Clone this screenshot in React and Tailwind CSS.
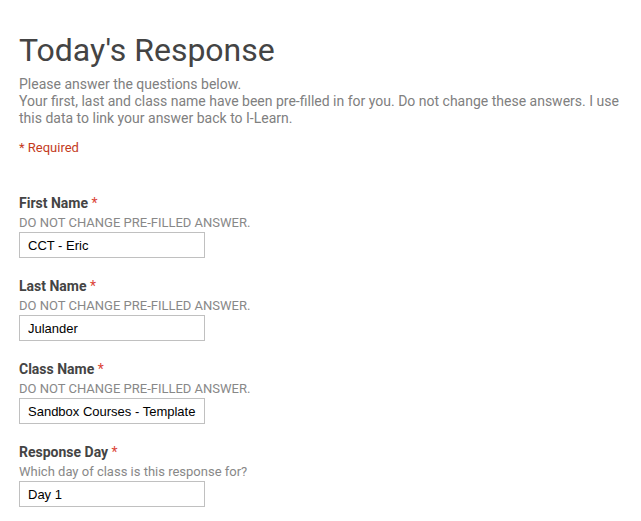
const fields = [
  { label: "First Name", help: "DO NOT CHANGE PRE-FILLED ANSWER.", value: "CCT - Eric" },
  { label: "Last Name", help: "DO NOT CHANGE PRE-FILLED ANSWER.", value: "Julander" },
  { label: "Class Name", help: "DO NOT CHANGE PRE-FILLED ANSWER.", value: "Sandbox Courses - Template" },
  { label: "Response Day", help: "Which day of class is this response for?", value: "Day 1" },
];

const App = () => {
  return (
    <div className="min-h-screen w-full bg-white font-['Roboto',sans-serif] px-[19px] pt-[28px]">
      <h1 className="text-[32px] leading-[44px] text-[#444] font-normal">Today's Response</h1>
      <div className="mt-[4px] text-[14px] leading-[17px] text-[#808080]">
        <p>Please answer the questions below.</p>
        <p>
          Your first, last and class name have been pre-filled in for you. Do not change these answers. I use this
          data to link your answer back to I-Learn.
        </p>
      </div>
      <p className="mt-[12px] text-[13px] leading-[17px] text-[#c43b1d]">* Required</p>

      <div className="mt-[38px] flex flex-col gap-[19px]">
        {fields.map((f) => (
          <div key={f.label} className="flex flex-col">
            <div className="text-[14px] leading-[18px] font-bold text-[#444]">
              {f.label} <span className="text-[#db4437] font-normal">*</span>
            </div>
            <div className="mt-[3px] text-[13px] leading-[16px] text-[#888]">{f.help}</div>
            <input
              readOnly
              value={f.value}
              className="mt-[1px] w-[186px] h-[26px] border border-[#c0c0c0] px-[8px] text-[13px] text-black font-['Liberation_Sans',Arial,sans-serif] outline-none"
            />
          </div>
        ))}
      </div>
    </div>
  );
};

export default App;
